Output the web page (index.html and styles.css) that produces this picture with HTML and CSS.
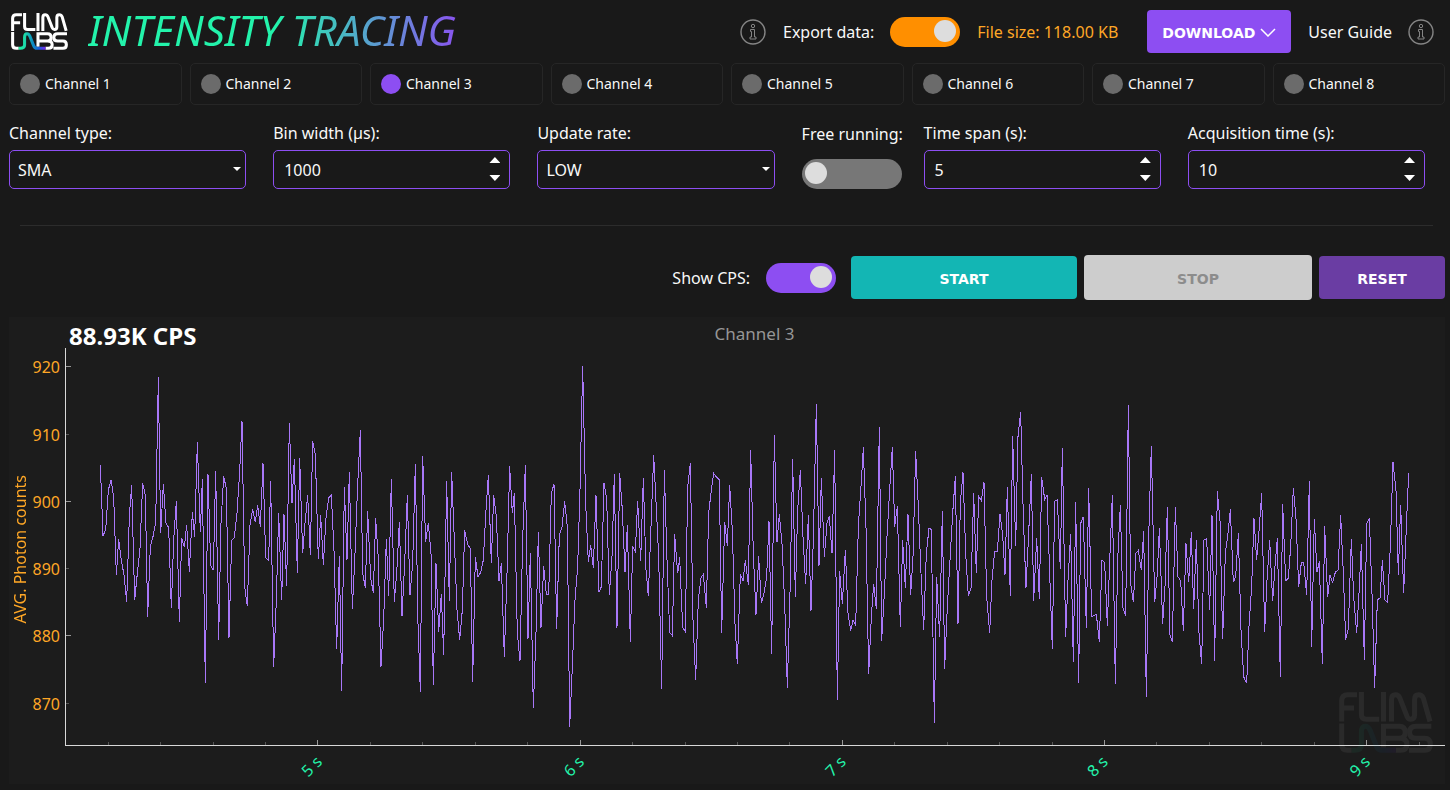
FILE: index.html
```html
<!DOCTYPE html>
<html lang="en">
<head>
<meta charset="utf-8">
<title>Intensity Tracing</title>
<link rel="stylesheet" href="styles.css">
</head>
<body>
<svg class="defs" aria-hidden="true">
  <defs>
    <linearGradient id="brand" gradientUnits="userSpaceOnUse" x1="40" y1="0" x2="172" y2="0">
      <stop offset="0" stop-color="#1ef5a4"/><stop offset=".2" stop-color="#1edca8"/><stop offset=".5" stop-color="#0c8fc0"/><stop offset=".72" stop-color="#1663d8"/><stop offset="1" stop-color="#7a22f0"/>
    </linearGradient>
    <symbol id="logo" viewBox="0 0 281 182">
      <g fill="none" stroke="#fff" stroke-width="15">
        <path d="M8 88V26Q8 8 26 8H54M8 48H45M67 0V66Q67 81 82 81H120M133 0V88"/>
        <path d="M157 88V22Q157 8 169 8Q178 8 182 18L203 72Q207 81 214 81Q226 81 226 67V22Q226 8 238 8Q248 8 252 18L272 88"/>
        <path d="M8 94V156Q8 174 26 174H38M133 166V102H180Q198 102 198 120Q198 138 180 138H133M180 138Q203 138 203 156Q203 174 184 174H170"/>
        <path d="M276 102H230Q211 102 211 120Q211 138 230 138H256Q273 138 273 156Q273 174 256 174H209"/>
        <path stroke="url(#brand)" d="M38 174H46Q67 174 67 158V120Q67 102 79 102Q88 102 93 114L112 162Q117 174 128 174H170"/>
      </g>
    </symbol>
    <symbol id="info" viewBox="0 0 26 26">
      <g fill="none" stroke="currentColor">
        <circle cx="13" cy="13" r="12" stroke-width="1.4"/>
        <circle cx="13" cy="7" r="1.7"/>
        <path d="M10.5 10.5h4v7.5h1.500v2h-6v-2h1.500v-5.500h-1z"/>
      </g>
    </symbol>
  </defs>
</svg>

<header class="topbar">
  <svg class="logo" role="img" aria-label="FLIM LABS"><use href="#logo"/></svg>
  <h1 class="title">INTENSITY TRACING</h1>
  <div class="tools">
    <svg class="info" aria-hidden="true"><use href="#info"/></svg>
    <label class="text" for="export">Export data:</label>
    <input class="switch switch-orange" type="checkbox" id="export" checked>
    <span class="filesize">File size: 118.00 KB</span>
    <button class="btn btn-download" type="button">DOWNLOAD
      <svg class="chevron" viewBox="0 0 16 9" aria-hidden="true"><path d="M1 1l7 7 7-7"/></svg>
    </button>
    <a class="guide" href="#">User Guide <svg class="info" aria-hidden="true"><use href="#info"/></svg></a>
  </div>
</header>

<div class="channels">
  <label class="channel"><input class="dot" type="checkbox">Channel 1</label>
  <label class="channel"><input class="dot" type="checkbox">Channel 2</label>
  <label class="channel"><input class="dot" type="checkbox" checked>Channel 3</label>
  <label class="channel"><input class="dot" type="checkbox">Channel 4</label>
  <label class="channel"><input class="dot" type="checkbox">Channel 5</label>
  <label class="channel"><input class="dot" type="checkbox">Channel 6</label>
  <label class="channel"><input class="dot" type="checkbox">Channel 7</label>
  <label class="channel"><input class="dot" type="checkbox">Channel 8</label>
</div>

<form class="controls">
  <div class="field">
    <label class="text" for="type">Channel type:</label>
    <div class="box"><select class="entry" id="type"><option>SMA</option><option>USB</option></select><svg class="caret" viewBox="0 0 8 4" aria-hidden="true"><path d="M0 0h8L4 4z"/></svg></div>
  </div>
  <div class="field">
    <label class="text" for="bin">Bin width (µs):</label>
    <div class="box"><input class="entry entry-number" id="bin" type="number" value="1000">
      <span class="spin"><button class="step up" type="button" aria-label="Increase bin width"></button><button class="step down" type="button" aria-label="Decrease bin width"></button></span></div>
  </div>
  <div class="field">
    <label class="text" for="rate">Update rate:</label>
    <div class="box"><select class="entry" id="rate"><option>LOW</option><option>HIGH</option></select><svg class="caret" viewBox="0 0 8 4" aria-hidden="true"><path d="M0 0h8L4 4z"/></svg></div>
  </div>
  <div class="field field-switch">
    <label class="text" for="free">Free running:</label>
    <input class="switch switch-wide" type="checkbox" id="free">
  </div>
  <div class="field">
    <label class="text" for="span">Time span (s):</label>
    <div class="box"><input class="entry entry-number" id="span" type="number" value="5">
      <span class="spin"><button class="step up" type="button" aria-label="Increase time span"></button><button class="step down" type="button" aria-label="Decrease time span"></button></span></div>
  </div>
  <div class="field">
    <label class="text" for="acq">Acquisition time (s):</label>
    <div class="box"><input class="entry entry-number" id="acq" type="number" value="10">
      <span class="spin"><button class="step up" type="button" aria-label="Increase acquisition time"></button><button class="step down" type="button" aria-label="Decrease acquisition time"></button></span></div>
  </div>
</form>

<hr class="divider">

<div class="actions">
  <label class="text" for="cps">Show CPS:</label>
  <input class="switch" type="checkbox" id="cps" checked>
  <button class="btn btn-start" type="button">START</button>
  <button class="btn btn-stop" type="button" disabled>STOP</button>
  <button class="btn btn-reset" type="button">RESET</button>
</div>

<main class="chart">
  <div class="chart-head">
    <strong class="cps">88.93K CPS</strong>
    <h2 class="chart-title">Channel 3</h2>
  </div>
  <div class="chart-body">
    <div class="y-name"><span class="y-name-text">AVG. Photon counts</span></div>
    <svg class="plot" role="img" aria-label="Photon counts over time">
      <g class="y-labels">
        <text x="-6" y="4.79%" dy="6">920</text>
        <text x="-6" y="21.91%" dy="6">910</text>
        <text x="-6" y="38.79%" dy="6">900</text>
        <text x="-6" y="55.67%" dy="6">890</text>
        <text x="-6" y="72.54%" dy="6">880</text>
        <text x="-6" y="89.67%" dy="6">870</text>
      </g>
      <g class="x-labels">
        <text x="17.800%" y="100%" dy="27">5 s</text>
        <text x="36.81%" y="100%" dy="27">6 s</text>
        <text x="55.79%" y="100%" dy="27">7 s</text>
        <text x="74.78%" y="100%" dy="27">8 s</text>
        <text x="93.81%" y="100%" dy="27">9 s</text>
      </g>
      <svg class="scaled" width="100%" height="100%" viewBox="1 0 1379 397" preserveAspectRatio="none">
        <path class="minor" d="M0 86.500h4M0 220.500h4M0 355.500h4M43.500 397v-3M95.500 397v-3M148.500 397v-3M200.500 397v-3M305.500 397v-3M357.500 397v-3M410.500 397v-3M462.500 397v-3M567.500 397v-3M620.500 397v-3M672.500 397v-3M724.500 397v-3M829.500 397v-3M882.500 397v-3M934.500 397v-3M987.500 397v-3M1091.500 397v-3M1144.500 397v-3M1196.500 397v-3M1249.500 397v-3M1354.500 397v-3"/>
        <path class="major" d="M0 18.500h6M0 153.500h6M0 287.500h6M252.500 397v-5M515.500 397v-5M777.500 397v-5M1039.500 397v-5M1301.500 397v-5"/>
        <polyline class="trace" transform="translate(-65 -38) scale(.33333)" points="301,465 309,677 317,660 325,540 333,510 341,560 349,795 356,688 364,750 372,795 380,875 388,620 395,525 404,870 412,790 420,715 428,520 436,555 443,920 451,710 459,680 467,637 475,201 482,670 490,522 498,640 506,652 514,895 521,690 529,573 538,935 545,685 553,712 560,645 568,785 577,607 584,680 592,397 601,667 607,508 616,1120 624,493 632,765 640,781 647,484 656,990 663,640 671,499 679,535 687,983 695,692 703,683 711,610 719,485 726,334 734,830 742,889 750,645 758,598 766,637 773,586 781,650 789,460 797,743 806,751 812,514 821,1070 829,870 836,610 845,869 852,613 860,829 868,340 876,580 883,448 892,788 899,445 908,730 915,640 923,556 931,734 938,394 946,435 955,748 962,616 970,764 978,625 986,563 994,555 1002,720 1010,1018 1018,737"/>
        <polyline class="trace" transform="translate(255 -8) scale(.33333)" points="58,647 65,1052 73,441 81,659 88,397 97,806 104,667 112,457 121,270 128,700 136,743 143,514 152,715 160,758 167,535 175,655 183,980 191,840 199,598 206,767 214,418 223,785 230,700 238,547 246,828 254,670 262,466 270,765 278,670 286,372 294,850 301,1055 308,349 317,605 325,550 333,640 340,1034 348,670 356,875 364,762 371,944 380,424 388,782 395,397 403,600 411,810 419,899 427,810 434,571 443,613 451,625 458,1025 466,652 474,710 482,697 490,660 497,525 505,406 514,670 521,466 529,530 537,722 544,670 553,950 561,700 569,379 577,520 583,460 592,880 600,962 608,600 616,376 624,898 631,640 640,1105 648,880 655,577 663,863 671,679 679,762 686,764 694,460 702,432 710,868 718,585 726,562 734,484 742,562 749,1162 757,980 765,780 773,680 780,450 788,79 797,490 805,665 812,616 820,683 828,466 837,757 844,740 852,430 860,475 868,766 876,650 883,403 891,863"/>
        <polyline class="trace" transform="translate(535 -8) scale(.33333)" points="51,863 59,400 67,510 75,697 82,556 91,905 98,619 106,635 113,484 122,664 130,415 138,690 145,769 153,560 161,346 169,505 176,650 185,1048 193,391 201,660 209,877 217,887 224,583 233,700 239,652 248,862 256,875 263,440 271,370 279,840 287,1019 295,780 303,713 310,703 319,803 326,520 334,450 341,400 350,412 358,420 365,880 374,547 382,617 389,436 397,570 405,850 412,973 421,703 429,722 436,661 445,734 452,331 460,640 468,824 476,649 484,790 492,760 500,710 507,544 515,941 523,286 531,607 538,523 546,610 554,790 562,1043 570,760 578,358 586,770 593,510 601,391 609,590 617,733 625,526 633,812 640,600 649,193 657,677 664,415 673,650 681,550 688,529 696,640 704,331 712,1079 719,694 727,793 736,631 744,820 752,872 759,841 767,857 775,560 783,440 790,322 798,560 806,1003 814,830 821,731 829,808 838,262 845,902 853,760 861,590 869,450 877,322 884,560 892,499"/>
        <polyline class="trace" transform="translate(815 -8) scale(.33333)" points="52,499 61,862 68,601 76,743 84,523 92,764 99,650 107,334 115,500 123,700 131,869 139,640 147,565 154,568 163,1148 170,712 179,892 187,514 194,986 202,800 210,660 218,520 226,409 234,851 241,490 249,397 257,640 265,769 273,745 281,460 289,700 296,469 304,481 312,427 320,770 329,880 336,720 344,634 352,634 360,523 368,585 375,704 382,442 391,769 398,289 407,617 414,290 422,217 430,530 438,743 446,580 454,403 461,782 470,595 478,778 485,412 494,478 501,466 509,700 517,926 524,484 532,479 541,688 547,325 557,890 564,720 572,583 580,967 587,487 596,1028 602,550 610,530 619,863 626,445 635,830 642,826 649,823 658,905 666,661 674,668 682,857 690,640 697,466 706,1031 713,660 721,496 729,805 737,827 745,196 752,730 760,787 768,640 775,631 784,691 791,574 799,1070 807,560 814,319 824,787 832,700 838,565 848,851 855,740 862,502 870,885 877,905 886,502"/>
        <polyline class="trace" transform="translate(1095 -8) scale(.33333)" points="46,502 54,710 62,722 70,872 78,610 86,727 94,577 101,808 109,601 117,880 125,973 132,600 140,596 149,811 156,526 164,962 172,454 180,540 188,898 196,640 203,590 211,508 220,727 227,710 235,580 243,870 251,1010 260,1030 267,860 275,740 282,535 290,659 298,560 305,460 314,875 321,720 329,601 338,784 345,680 352,595 361,1010 368,493 377,722 385,715 392,620 400,445 408,535 416,740 424,668 431,667 440,764 448,424 455,920 463,538 471,697 478,664 487,973 494,559 503,772 510,706 518,727 526,697 534,690 542,526 550,700 557,899 565,865 574,598 581,770 590,880 597,760 604,613 613,959 620,552 628,535 636,760 644,1043 652,780 660,774 667,661 675,780 683,787 691,620 699,367 708,450 715,704 722,496 731,760 739,560 746,400"/>
      </svg>
    </svg>
    <svg class="watermark" aria-hidden="true"><use href="#logo"/></svg>
  </div>
</main>
</body>
</html>
```
FILE: styles.css
```css
* { box-sizing: border-box; }

body {
  margin: 0;
  padding: 0 5px 6px 9px;
  min-height: 100vh;
  display: flex;
  flex-direction: column;
  background: #191919;
  color: #f8f8f8;
  font: 16px/20px "Noto Sans", "Open Sans", sans-serif;
}

button, input, select { font: inherit; color: inherit; }

.defs { position: absolute; width: 0; height: 0; }

.topbar { display: flex; align-items: center; height: 63px; }
.logo { width: 57px; height: 37px; margin-left: 2px; }
.title {
  margin: 0 0 0 20px;
  padding: 0 8px 4px 0;
  font-size: 42px;
  line-height: 52px;
  font-weight: 400;
  font-style: italic;
  white-space: nowrap;
  background: linear-gradient(90deg, #23f3ab 50%, #8d4ef2 100%);
  -webkit-background-clip: text;
  background-clip: text;
  color: transparent;
}
.tools { display: flex; align-items: center; margin-left: auto; margin-right: 11px; white-space: nowrap; }
.info { width: 26px; height: 26px; color: #858585; }
.tools .text { margin: 0 16px 0 17px; }
.filesize { margin: 0 29px 0 17px; color: #ffa726; }
.guide {
  display: flex;
  align-items: center;
  gap: 16px;
  margin-left: 17px;
  color: inherit;
  text-decoration: none;
}

.switch {
  appearance: none;
  flex: none;
  width: 70px;
  height: 30px;
  margin: 0;
  padding: 3px 4px 5px;
  border-radius: 15px;
  background: #777;
  display: flex;
}
.switch::before { content: ""; width: 22px; height: 22px; border-radius: 50%; background: #ddd; }
.switch:checked { background: #8d4ef2; justify-content: flex-end; }
.switch-orange:checked { background: #ff8f00; }
.switch-wide { width: 100px; padding: 3px; }

.btn {
  height: 43px;
  padding: 2px 0 0;
  border: 0;
  border-radius: 4px;
  color: #fff;
  font: bold 14px/16px "DejaVu Sans", sans-serif;
}
.btn-download {
  display: flex;
  align-items: center;
  justify-content: center;
  gap: 5px;
  width: 144px;
  background: #8d4ef2;
}
.chevron { width: 16px; height: 9px; fill: none; stroke: #fff; stroke-width: 1.500; }

.channels { display: grid; grid-template-columns: repeat(8, 1fr); gap: 8px; }
.channel {
  display: flex;
  align-items: center;
  gap: 5px;
  height: 42px;
  padding: 0 10px;
  border: 1px solid #262626;
  border-radius: 5px;
  font-size: 14px;
}
.dot { appearance: none; width: 20px; height: 20px; margin: 0; border-radius: 50%; background: #6b6b6b; }
.dot:checked { background: #8d4ef2; }

.controls { display: flex; gap: 27px; padding: 18px 20px 36px 0; }
.field { flex: 1 1 0; min-width: 0; display: flex; flex-direction: column; gap: 7px; }
.field-switch { flex: none; width: 100px; margin-right: -5px; padding-top: 1px; gap: 15px; white-space: nowrap; }
.box { position: relative; }
.entry {
  appearance: none;
  display: block;
  width: 100%;
  height: 39px;
  margin: 0;
  padding: 0 8px;
  border: 1px solid #8d4ef2;
  border-radius: 5px;
  background: #191919;
  outline: 0;
}
.entry-number { padding: 0 40px 0 10px; appearance: textfield; }
.entry::-webkit-inner-spin-button { appearance: none; margin: 0; }
.caret { position: absolute; right: 5px; top: 17px; width: 8px; height: 4px; fill: #fff; pointer-events: none; }
.spin { position: absolute; right: 10px; top: 7px; bottom: 8px; display: flex; flex-direction: column; justify-content: space-between; }
.step { width: 11px; height: 6px; padding: 0; border: 0; background: #fff; }
.up { clip-path: polygon(50% 0, 100% 100%, 0 100%); }
.down { clip-path: polygon(0 0, 100% 0, 50% 100%); }

.divider { align-self: stretch; height: 1px; margin: 0 12px 0 11px; border: 0; background: #2c2c2c; }

.actions { display: flex; align-items: center; justify-content: flex-end; gap: 7px; padding: 29px 0 17px; }
.actions .text { margin-right: 9px; }
.actions .switch { margin-right: 8px; }
.btn-start { width: 226px; background: #13b6b4; }
.btn-stop { width: 228px; height: 45px; background: #cdcdcd; color: #8c8c8c; }
.btn-reset { width: 126px; background: #6a3da3; }

.chart { flex: 1; display: flex; flex-direction: column; min-height: 400px; background: #1c1c1c; }
.chart-head { display: grid; grid-template-columns: 1fr auto 1fr; height: 31px; padding: 0 5px 0 60px; }
.cps { font-size: 24px; line-height: 37px; font-weight: 700; color: #fff; }
.chart-title { margin: 0; font-size: 17px; line-height: 33px; font-weight: 400; color: #969696; }
.chart-body { flex: 1; display: flex; position: relative; padding-bottom: 38px; }
.y-name { width: 56px; padding-top: 4px; display: flex; align-items: center; color: #ffa726; }
.y-name-text { writing-mode: vertical-rl; transform: rotate(180deg); font-size: 16px; line-height: 22px; }
.plot {
  flex: 1;
  min-width: 0;
  border-left: 1px solid #d8d8d8;
  border-bottom: 1px solid #d8d8d8;
  overflow: visible;
  font-size: 16px;
}
.y-labels { fill: #ffa726; text-anchor: end; }
.x-labels { fill: #23f3ab; text-anchor: middle; }
.x-labels text { transform-box: fill-box; transform-origin: center; transform: rotate(-45deg); }
.minor, .major, .trace { fill: none; stroke-width: 1px; vector-effect: non-scaling-stroke; shape-rendering: crispEdges; }
.minor { stroke: #555; }
.major { stroke: #999; }
.trace { stroke: #a877f8; }
.watermark { position: absolute; right: 12px; bottom: 31px; width: 94px; height: 61px; opacity: .06; }
```
